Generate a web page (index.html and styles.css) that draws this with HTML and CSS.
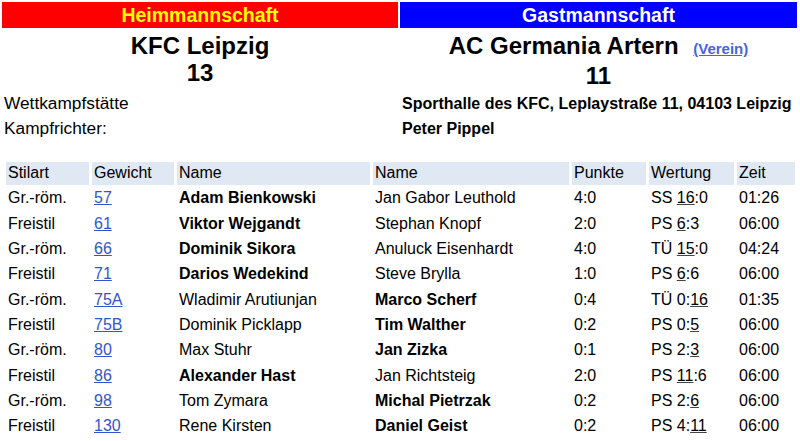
FILE: index.html
```html
<!DOCTYPE html>
<html lang="de">
<head>
<meta charset="utf-8">
<title>Begegnung</title>
<link rel="stylesheet" href="styles.css">
</head>
<body>
<div class="page">
  <div class="teams">
    <div class="team">
      <div class="bar bar-home">Heimmannschaft</div>
      <div class="team-name">KFC Leipzig</div>
      <div class="team-score">13</div>
    </div>
    <div class="team">
      <div class="bar bar-guest">Gastmannschaft</div>
      <div class="team-name">AC Germania Artern <a class="club-link" href="#">(Verein)</a></div>
      <div class="team-score">11</div>
    </div>
  </div>
  <div class="info">
    <div class="info-label">Wettkampfstätte</div>
    <div class="info-value">Sporthalle des KFC, Leplaystraße 11, 04103 Leipzig</div>
    <div class="info-label">Kampfrichter:</div>
    <div class="info-value">Peter Pippel</div>
  </div>
  <table class="bouts">
    <colgroup>
      <col class="c-style"><col class="c-weight"><col class="c-name1"><col class="c-name2"><col class="c-points"><col class="c-rating"><col class="c-time">
    </colgroup>
    <thead>
      <tr><th>Stilart</th><th>Gewicht</th><th>Name</th><th>Name</th><th>Punkte</th><th>Wertung</th><th>Zeit</th></tr>
    </thead>
    <tbody>
      <tr><td>Gr.-röm.</td><td><a href="#">57</a></td><td class="win">Adam Bienkowski</td><td>Jan Gabor Leuthold</td><td>4:0</td><td>SS <u>16</u>:0</td><td>01:26</td></tr>
      <tr><td>Freistil</td><td><a href="#">61</a></td><td class="win">Viktor Wejgandt</td><td>Stephan Knopf</td><td>2:0</td><td>PS <u>6</u>:3</td><td>06:00</td></tr>
      <tr><td>Gr.-röm.</td><td><a href="#">66</a></td><td class="win">Dominik Sikora</td><td>Anuluck Eisenhardt</td><td>4:0</td><td>TÜ <u>15</u>:0</td><td>04:24</td></tr>
      <tr><td>Freistil</td><td><a href="#">71</a></td><td class="win">Darios Wedekind</td><td>Steve Brylla</td><td>1:0</td><td>PS <u>6</u>:6</td><td>06:00</td></tr>
      <tr><td>Gr.-röm.</td><td><a href="#">75A</a></td><td>Wladimir Arutiunjan</td><td class="win">Marco Scherf</td><td>0:4</td><td>TÜ 0:<u>16</u></td><td>01:35</td></tr>
      <tr><td>Freistil</td><td><a href="#">75B</a></td><td>Dominik Picklapp</td><td class="win">Tim Walther</td><td>0:2</td><td>PS 0:<u>5</u></td><td>06:00</td></tr>
      <tr><td>Gr.-röm.</td><td><a href="#">80</a></td><td>Max Stuhr</td><td class="win">Jan Zizka</td><td>0:1</td><td>PS 2:<u>3</u></td><td>06:00</td></tr>
      <tr><td>Freistil</td><td><a href="#">86</a></td><td class="win">Alexander Hast</td><td>Jan Richtsteig</td><td>2:0</td><td>PS <u>11</u>:6</td><td>06:00</td></tr>
      <tr><td>Gr.-röm.</td><td><a href="#">98</a></td><td>Tom Zymara</td><td class="win">Michal Pietrzak</td><td>0:2</td><td>PS 2:<u>6</u></td><td>06:00</td></tr>
      <tr><td>Freistil</td><td><a href="#">130</a></td><td>Rene Kirsten</td><td class="win">Daniel Geist</td><td>0:2</td><td>PS 4:<u>11</u></td><td>06:00</td></tr>
    </tbody>
  </table>
</div>
</body>
</html>
```

FILE: styles.css
```css
html, body {
  margin: 0;
  padding: 0;
  background: #ffffff;
}

body {
  font-family: "Liberation Sans", Arial, sans-serif;
  color: #000000;
  font-size: 16px;
}

.page {
  padding: 2px 3px 0 2px;
}

.teams {
  display: grid;
  grid-template-columns: 396px 397px;
  column-gap: 2px;
}

.team {
  text-align: center;
}

.bar {
  height: 26px;
  line-height: 26px;
  font-size: 19.5px;
  font-weight: bold;
}

.bar-home {
  background: #ff0000;
  color: #ffff00;
}

.bar-guest {
  background: #0000ff;
  color: #ffffff;
}

.team-name {
  margin-top: 4px;
  font-size: 24px;
  line-height: 27px;
  font-weight: bold;
}

.team-score {
  font-size: 24px;
  line-height: 27px;
  font-weight: bold;
}

.club-link {
  margin-left: 8px;
  font-size: 15px;
  color: #4466dd;
  text-decoration: underline;
}

.info {
  display: grid;
  grid-template-columns: 398px 1fr;
  margin-top: 2px;
  margin-left: 2px;
}

.info-label {
  font-size: 17.3px;
  line-height: 25px;
}

.info-value {
  font-size: 16px;
  line-height: 25px;
  font-weight: bold;
}

.bouts {
  margin-top: 18.5px;
  margin-left: 1px;
  border-collapse: separate;
  border-spacing: 3px 2px;
  table-layout: fixed;
  width: 795px;
}

.c-style { width: 83px; }
.c-weight { width: 82px; }
.c-name1 { width: 193px; }
.c-name2 { width: 196px; }
.c-points { width: 74px; }
.c-rating { width: 85px; }
.c-time { width: 58px; }

.bouts th,
.bouts td {
  padding: 0 2px;
  height: 23.3px;
  text-align: left;
  font-size: 16px;
  white-space: nowrap;
  overflow: hidden;
}

.bouts th {
  background: #dfe8f3;
  font-weight: normal;
}

.bouts td a {
  color: #3355cc;
  text-decoration: underline;
}

.bouts td.win {
  font-weight: bold;
}

.bouts u {
  text-decoration-color: #444444;
}
```
